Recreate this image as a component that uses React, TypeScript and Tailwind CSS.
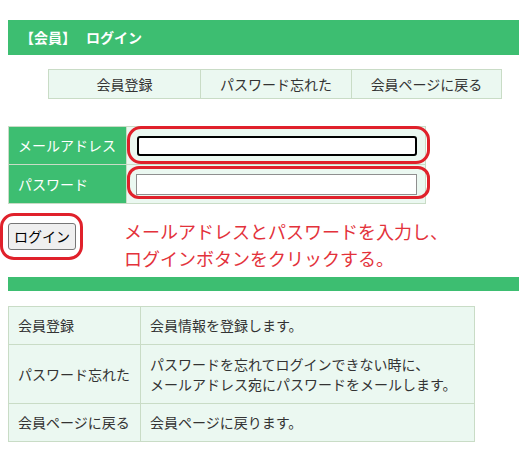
import React from "react";

const font = { fontFamily: '"Noto Sans CJK JP", "Noto Sans", sans-serif' };

export default function App() {
  return (
    <div className="relative w-[519px] h-[463px] bg-white pt-[20px] pl-[8px] text-[#333]" style={font}>
      {/* header */}
      <div className="h-[35px] bg-[#3dbe71] flex items-center pl-[12px] text-white text-[14px] font-bold">
        <span>【会員】</span>
        <span className="ml-[10px]">ログイン</span>
      </div>

      {/* nav */}
      <div className="mt-[14px] ml-[40px] w-[454px] h-[30px] flex border border-[#c9dcc6] bg-[#ebf8f1] text-[14px] text-[#333]">
        <div className="w-[152px] flex items-center justify-center border-r border-[#c9dcc6]">会員登録</div>
        <div className="w-[151px] flex items-center justify-center border-r border-[#c9dcc6]">パスワード忘れた</div>
        <div className="flex-1 flex items-center justify-center">会員ページに戻る</div>
      </div>

      {/* form */}
      <div className="mt-[27px] w-[418px] border border-[#c9dcc6] text-[14px]">
        <div className="flex h-[38px] border-b border-[#c9dcc6]">
          <div className="w-[118px] bg-[#3dbe71] text-white flex items-center pl-[9px] border-r border-[#c9dcc6]">メールアドレス</div>
          <div className="flex-1 bg-[#ebf8f1] flex items-center pl-[10px]">
            <div className="w-[280px] h-[20px] bg-white border-2 border-black rounded-[3px]" />
          </div>
        </div>
        <div className="flex h-[38px]">
          <div className="w-[118px] bg-[#3dbe71] text-white flex items-center pl-[9px] border-r border-[#c9dcc6]">パスワード</div>
          <div className="flex-1 bg-[#ebf8f1] flex items-center pl-[9px]">
            <div className="w-[281px] h-[21px] bg-white border border-[#8f8f8f]" />
          </div>
        </div>
      </div>

      {/* login row */}
      <div className="mt-[19px] flex items-start">
        <div className="w-[68px] h-[27px] bg-[#efefef] border border-[#767676] rounded-[3px] flex items-center justify-center text-[14px] text-black">ログイン</div>
        <div className="ml-[48px] -mt-[5px] text-[18px] leading-[27px] text-[#e3323b]">
          <div>メールアドレスとパスワードを入力し、</div>
          <div>ログインボタンをクリックする。</div>
        </div>
      </div>

      {/* green bar */}
      <div className="mt-[5px] h-[14px] bg-[#3dbe71]" />

      {/* info table */}
      <div className="mt-[15px] w-[467px] border border-[#c9dcc6] bg-[#ebf8f1] text-[14px] text-[#333]">
        <div className="flex h-[38px] border-b border-[#c9dcc6]">
          <div className="w-[132px] pl-[9px] flex items-center border-r border-[#c9dcc6]">会員登録</div>
          <div className="flex-1 pl-[9px] flex items-center">会員情報を登録します。</div>
        </div>
        <div className="flex h-[59px] border-b border-[#c9dcc6]">
          <div className="w-[132px] pl-[9px] flex items-center border-r border-[#c9dcc6]">パスワード忘れた</div>
          <div className="flex-1 pl-[9px] flex flex-col justify-center leading-[20px]">
            <div>パスワードを忘れてログインできない時に、</div>
            <div>メールアドレス宛にパスワードをメールします。</div>
          </div>
        </div>
        <div className="flex h-[37px]">
          <div className="w-[132px] pl-[9px] flex items-center border-r border-[#c9dcc6]">会員ページに戻る</div>
          <div className="flex-1 pl-[9px] flex items-center">会員ページに戻ります。</div>
        </div>
      </div>

      {/* red annotation outlines */}
      <div className="absolute left-[127px] top-[126px] w-[303px] h-[38px] border-[3px] border-[#e0212b] rounded-[14px]" />
      <div className="absolute left-[127px] top-[166px] w-[303px] h-[33px] border-[3px] border-[#e0212b] rounded-[12px]" />
      <div className="absolute left-[0px] top-[213px] w-[83px] h-[47px] border-[3px] border-[#e0212b] rounded-[14px]" />
    </div>
  );
}
